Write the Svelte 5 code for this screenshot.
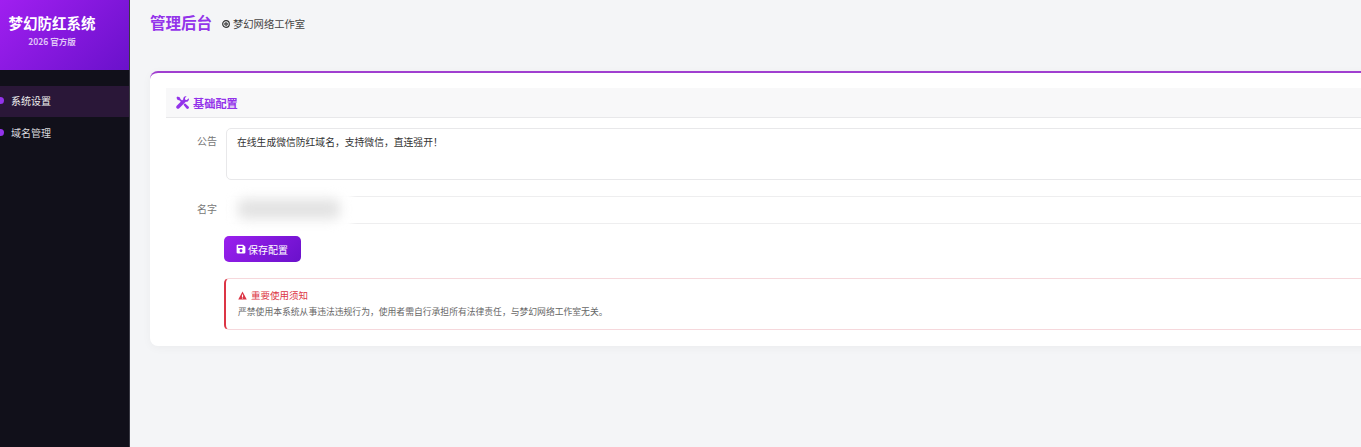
<script>
  const navItems = [
    { label: '系统设置', active: true },
    { label: '域名管理', active: false },
  ];
</script>

<div class="layout">
  <aside class="sidebar">
    <div class="brand">
      <h1>梦幻防红系统</h1>
      <p>2026 官方版</p>
    </div>
    <nav class="nav">
      {#each navItems as item}
        <div class="nav-item" class:active={item.active}>
          <span class="nav-icon"></span>
          <span>{item.label}</span>
        </div>
      {/each}
    </nav>
  </aside>

  <main class="main">
    <header class="topbar">
      <h2>管理后台</h2>
      <span class="studio">
        <svg viewBox="0 0 16 16" width="8" height="8" fill="none" stroke="#333" stroke-width="2.4">
          <circle cx="8" cy="8" r="6.6" />
          <circle cx="8" cy="8" r="2.4" />
        </svg>
        梦幻网络工作室
      </span>
    </header>

    <section class="card">
      <div class="card-head">
        <svg viewBox="0 0 16 16" width="13" height="13" fill="#9333ea">
          <path d="M2 0.5 L0.5 2 L2 4.8 L4 5.2 L6.8 8 L8.6 6.4 L5.4 3.6 L4.9 1.8 Z" />
          <path d="M12 0.2 C10 0.2 8.5 2 9 4 L0.9 12 C0 13 0 14.2 0.9 15.1 C1.8 16 3 16 4 15.1 L12 7 C14 7.5 15.9 6 15.9 3.9 L15.6 2.9 L13.4 5 L11.3 4.7 L11 2.6 L13.1 0.4 Z" />
          <path d="M9.2 10.8 L11 9 L15.4 12.8 C16.2 13.7 16.1 14.8 15.4 15.4 C14.7 16.1 13.6 16.1 12.9 15.4 Z" />
        </svg>
        <span>基础配置</span>
      </div>

      <div class="form">
        <div class="row">
          <span class="label">公告</span>
          <div class="textarea">在线生成微信防红域名，支持微信，直连强开！</div>
        </div>
        <div class="row name-row">
          <span class="label">名字</span>
          <div class="input"></div>
          <div class="mask"></div>
          <div class="blur"></div>
        </div>
        <div class="actions">
          <button class="save">
            <svg viewBox="0 0 16 16" width="10" height="10" fill="#fff">
              <path fill-rule="evenodd" d="M2 1 H11.5 L15 4.5 V13.5 C15 14.3 14.3 15 13.5 15 H2.5 C1.7 15 1 14.3 1 13.5 V2.5 C1 1.7 1.5 1 2 1 Z M3.5 3 V6.5 H10.5 V3 Z M8 8.5 A2.3 2.3 0 1 0 8 13.1 A2.3 2.3 0 1 0 8 8.5 Z" />
            </svg>
            保存配置
          </button>
        </div>
        <div class="notice">
          <div class="notice-title">
            <svg viewBox="0 0 16 16" width="9" height="9" fill="#dc3545">
              <path fill-rule="evenodd" d="M8 1 L15.6 15 H0.4 Z M7 6 V10.5 H9 V6 Z M7 11.5 V13.2 H9 V11.5 Z" />
            </svg>
            重要使用须知
          </div>
          <p>严禁使用本系统从事违法违规行为，使用者需自行承担所有法律责任，与梦幻网络工作室无关。</p>
        </div>
      </div>
    </section>
  </main>
</div>

<style>
:global(body) {
  overflow: hidden;
  background: #f4f5f7;
}

.layout {
  display: flex;
  width: 1500px;
  height: 447px;
  font-family: "Noto Sans CJK SC", "Liberation Sans", sans-serif;
}

.sidebar {
  width: 129px;
  flex-shrink: 0;
  background: #11101a;
  border-right: 1px solid #3a3a44;
}

.brand {
  height: 70px;
  box-sizing: border-box;
  padding: 13px 25px 0 0;
  text-align: center;
  color: #fff;
  background: linear-gradient(135deg, #a01ff0, #6a11cb);
}

.brand h1 {
  margin: 0;
  font-size: 14.5px;
  line-height: 20px;
  font-weight: 700;
}

.brand p {
  margin: 3px 0 0;
  font-size: 8.5px;
  line-height: 11px;
  font-weight: 700;
  color: rgba(255, 255, 255, 0.75);
}

.nav {
  padding-top: 16px;
  display: flex;
  flex-direction: column;
  gap: 1px;
}

.nav-item {
  display: flex;
  align-items: center;
  gap: 7px;
  height: 31px;
  padding-bottom: 2px;
  box-sizing: border-box;
  font-size: 10px;
  color: #d8d8dc;
}

.nav-item.active {
  background: #2a1738;
  color: #eee;
}

.nav-icon {
  width: 7px;
  height: 7px;
  margin-left: -3px;
  border-radius: 50%;
  background: #9333ea;
}

.main {
  flex: 1;
  padding: 0 0 0 20px;
}

.topbar {
  height: 71px;
  box-sizing: border-box;
  display: flex;
  align-items: flex-start;
  gap: 10px;
  padding-top: 11px;
}

.topbar h2 {
  margin: 0;
  font-size: 15.5px;
  line-height: 22px;
  font-weight: 700;
  color: #9333ea;
}

.studio {
  display: flex;
  align-items: center;
  gap: 3px;
  font-size: 10.3px;
  line-height: 14px;
  margin-top: 6px;
  color: #444;
}

.card {
  height: 275px;
  box-sizing: border-box;
  padding: 15px 16px 0;
  background: #fff;
  border-top: 2px solid #a03fd0;
  border-radius: 8px;
  box-shadow: 0 2px 10px rgba(0, 0, 0, 0.04);
}

.card-head {
  display: flex;
  align-items: center;
  gap: 4px;
  height: 29px;
  padding-left: 10px;
  background: #f8f8f9;
  border-bottom: 1px solid #e8e8ea;
  font-size: 11.2px;
  font-weight: 700;
  color: #9333ea;
}

.form {
  padding: 10px 0 0 58px;
}

.row {
  position: relative;
  display: flex;
}

.label {
  position: absolute;
  left: -40px;
  top: 6px;
  width: 33px;
  text-align: right;
  font-size: 10px;
  line-height: 14px;
  color: #777;
}

.textarea {
  flex: 1;
  height: 52px;
  box-sizing: border-box;
  margin-left: 2px;
  padding: 6px 10px;
  border: 1px solid #e8e8ea;
  border-radius: 5px;
  font-size: 9.8px;
  line-height: 14px;
  color: #333;
}

.name-row {
  margin-top: 16px;
}

.input {
  flex: 1;
  height: 28px;
  box-sizing: border-box;
  margin-left: 2px;
  border: 1px solid #eeeeef;
  border-radius: 5px;
}

.mask {
  position: absolute;
  left: -2px;
  top: -4px;
  width: 130px;
  height: 36px;
  background: #fff;
  filter: blur(3px);
}

.blur {
  position: absolute;
  left: 14px;
  top: 3px;
  width: 102px;
  height: 20px;
  border-radius: 6px;
  background: #e3e3e3;
  filter: blur(6px);
}

.actions {
  margin-top: 12px;
}

.save {
  display: flex;
  align-items: center;
  gap: 2px;
  height: 26px;
  padding: 0 13px 0 12px;
  border: 0;
  border-radius: 5px;
  font-family: inherit;
  font-size: 10px;
  color: #fff;
  background: linear-gradient(135deg, #9a20ee, #6a11cb);
}

.notice {
  height: 52px;
  box-sizing: border-box;
  margin-top: 16px;
  padding: 10px 12px;
  border: 1px solid #f6d8dc;
  border-left: 2px solid #dc3545;
  border-radius: 5px;
}

.notice-title {
  display: flex;
  align-items: center;
  gap: 4px;
  font-size: 9.5px;
  line-height: 12px;
  color: #dc3545;
}

.notice p {
  margin: 5px 0 0;
  font-size: 8.8px;
  line-height: 12px;
  color: #666;
}
</style>
